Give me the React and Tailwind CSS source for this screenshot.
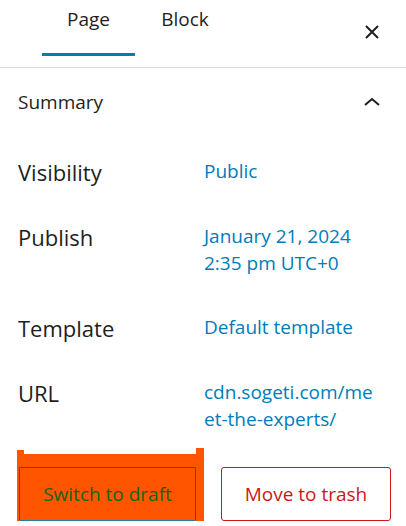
import React from 'react';

const rows = [
  { label: 'Visibility', value: ['Public'] },
  { label: 'Publish', value: ['January 21, 2024', '2:35 pm UTC+0'] },
  { label: 'Template', value: ['Default template'] },
  { label: 'URL', value: ['cdn.sogeti.com/me', 'et-the-experts/'] },
];

const App = () => {
  return (
    <div className="w-[406px] h-[526px] bg-white overflow-hidden text-[#1e1e1e]" style={{ fontFamily: '"Open Sans", "Noto Sans", sans-serif' }}>
      {/* Tabs header */}
      <div className="flex h-[68px] border-b border-[#dddddd]">
        <div className="flex pl-[42px]">
          <div className="w-[93px] h-[56px] border-b-[3px] border-[#007cba] flex justify-center pt-[6px] text-[19px] leading-[26px] font-medium">
            Page
          </div>
          <div className="w-[100px] h-[56px] flex justify-center pt-[6px] text-[19px] leading-[26px] font-medium">
            Block
          </div>
        </div>
        <button className="ml-auto mr-[22px] mt-[20px] w-[24px] h-[24px] flex items-center justify-center">
          <svg width="24" height="24" viewBox="0 0 24 24" fill="none" stroke="#1e1e1e" strokeWidth="2">
            <path d="M6 6l12 12M18 6L6 18" />
          </svg>
        </button>
      </div>

      {/* Summary panel */}
      <div className="flex items-center justify-between h-[68px] pl-[18px] pr-[22px]">
        <span className="text-[19px] font-medium">Summary</span>
        <svg width="24" height="24" viewBox="0 0 24 24" fill="none" stroke="#1e1e1e" strokeWidth="2">
          <path d="M5 15l7-6 7 6" />
        </svg>
      </div>

      <div className="flex flex-col gap-[37px] pt-[22px] pl-[18px]">
        {rows.map((row) => (
          <div key={row.label} className="flex">
            <div className="w-[186px] shrink-0 text-[22px] leading-[27px] pt-[1px]">{row.label}</div>
            <div className="w-[180px] text-[19px] leading-[27px] text-[#007cba]">
              {row.value.map((v) => (
                <div key={v}>{v}</div>
              ))}
            </div>
          </div>
        ))}
      </div>

      {/* Actions */}
      <div className="flex items-end gap-[17px] pl-[17px] mt-[21px]">
        {/* orange marker scribble around the draft button */}
        <div className="relative flex bg-[#ff5500] pt-[13px] pl-[2px] pr-[8px]">
          <div className="absolute left-0 top-[-4px] w-[7px] h-[5px] bg-[#ff5500]" />
          <div className="absolute right-0 top-[-6px] w-[8px] h-[7px] bg-[#ff5500]" />
          <button className="block w-[177px] h-[54px] bg-[#ff5500] border border-[#1f6b1f] border-b-[#1b7fa8] rounded-[2px] text-[19px] text-[#146314]">
            Switch to draft
          </button>
        </div>
        <button className="block w-[170px] h-[54px] bg-white border border-[#cc1818] rounded-[3px] text-[19px] text-[#cc1818]">
          Move to trash
        </button>
      </div>
    </div>
  );
};

export default App;
